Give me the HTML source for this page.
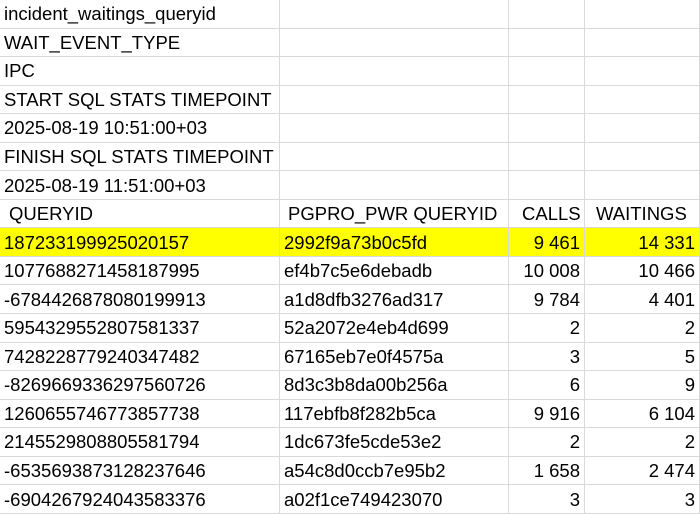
<!DOCTYPE html>
<html><head><meta charset="utf-8"><style>
html,body{margin:0;padding:0;background:#fff;width:700px;height:514px;overflow:hidden}
table{border-collapse:collapse;table-layout:fixed;width:710px;font-family:"Liberation Sans",sans-serif;font-size:18.5px;color:#000}
td{height:27.55px;border:1px solid #d9d9d9;padding:0 4px;white-space:nowrap;overflow:visible;line-height:27px}
td.r{text-align:right;padding-right:4px}
tr.y td{background:#ffff00}
tr.h td:nth-child(1){padding-left:9px}
tr.h td:nth-child(2){padding-left:8px}
tr.h td:nth-child(3){padding-left:13px}
tr.h td:nth-child(4){padding-left:11px}
</style></head><body>
<table style="margin:-1px 0 0 -1px">
<colgroup><col style="width:280px"><col style="width:229px"><col style="width:76px"><col style="width:115px"><col style="width:10px"></colgroup>
<tr><td>incident_waitings_queryid</td><td></td><td></td><td></td><td></td></tr>
<tr><td>WAIT_EVENT_TYPE</td><td></td><td></td><td></td><td></td></tr>
<tr><td>IPC</td><td></td><td></td><td></td><td></td></tr>
<tr><td>START SQL STATS TIMEPOINT</td><td></td><td></td><td></td><td></td></tr>
<tr><td>2025-08-19 10:51:00+03</td><td></td><td></td><td></td><td></td></tr>
<tr><td>FINISH SQL STATS TIMEPOINT</td><td></td><td></td><td></td><td></td></tr>
<tr><td>2025-08-19 11:51:00+03</td><td></td><td></td><td></td><td></td></tr>
<tr class="h"><td>QUERYID</td><td>PGPRO_PWR QUERYID</td><td>CALLS</td><td>WAITINGS</td><td></td></tr>
<tr class="y"><td>187233199925020157</td><td>2992f9a73b0c5fd</td><td class="r">9 461</td><td class="r">14 331</td><td style="background:#fff"></td></tr>
<tr><td>1077688271458187995</td><td>ef4b7c5e6debadb</td><td class="r">10 008</td><td class="r">10 466</td><td></td></tr>
<tr><td>-6784426878080199913</td><td>a1d8dfb3276ad317</td><td class="r">9 784</td><td class="r">4 401</td><td></td></tr>
<tr><td>5954329552807581337</td><td>52a2072e4eb4d699</td><td class="r">2</td><td class="r">2</td><td></td></tr>
<tr><td>7428228779240347482</td><td>67165eb7e0f4575a</td><td class="r">3</td><td class="r">5</td><td></td></tr>
<tr><td>-8269669336297560726</td><td>8d3c3b8da00b256a</td><td class="r">6</td><td class="r">9</td><td></td></tr>
<tr><td>1260655746773857738</td><td>117ebfb8f282b5ca</td><td class="r">9 916</td><td class="r">6 104</td><td></td></tr>
<tr><td>2145529808805581794</td><td>1dc673fe5cde53e2</td><td class="r">2</td><td class="r">2</td><td></td></tr>
<tr><td>-6535693873128237646</td><td>a54c8d0ccb7e95b2</td><td class="r">1 658</td><td class="r">2 474</td><td></td></tr>
<tr><td>-6904267924043583376</td><td>a02f1ce749423070</td><td class="r">3</td><td class="r">3</td><td></td></tr>
</table>
</body></html>
